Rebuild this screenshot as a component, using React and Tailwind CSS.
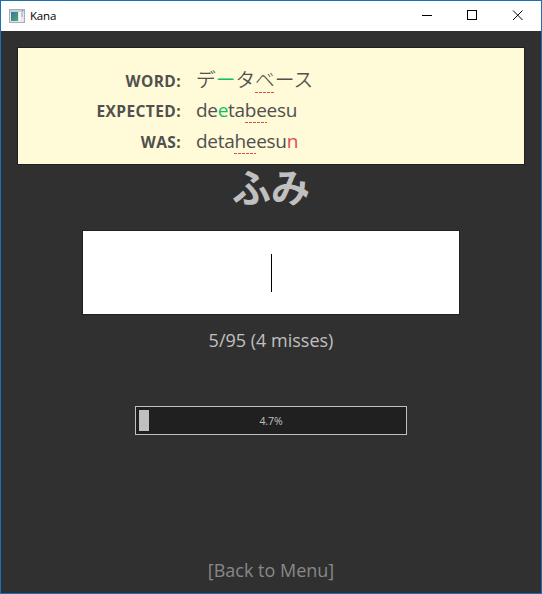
import React from "react";

const latin = "font-['Open_Sans','Noto_Sans',sans-serif]";
const kana = "font-['Noto_Sans_CJK_JP',sans-serif]";

function Squiggle({ children, className = "" }) {
  return (
    <span className="relative inline-block">
      {children}
      <span className={`absolute left-0 right-0 h-px bg-[linear-gradient(90deg,#dc4c50_75%,transparent_75%)] bg-[size:4px_1px] bg-repeat-x ${className}`} />
    </span>
  );
}

function TitleBar() {
  return (
    <header className="flex h-[30px] shrink-0 items-center bg-white text-black">
      <svg className="ml-2 block" width="16" height="14" viewBox="0 0 16 14" shapeRendering="crispEdges">
        <defs>
          <linearGradient id="pane" x1="0" y1="0" x2="1" y2="1">
            <stop offset="0" stopColor="#3d72a8" />
            <stop offset="1" stopColor="#4fa96b" />
          </linearGradient>
        </defs>
        <rect x="0.5" y="0.5" width="15" height="13" fill="#e4e7e9" stroke="#a9b0b5" />
        <rect x="1" y="1" width="14" height="2" fill="#c9ced2" />
        <rect x="2" y="3" width="7" height="9" fill="url(#pane)" />
        <rect x="10" y="3" width="2" height="9" fill="#f7f7f7" />
        <rect x="12" y="3" width="2" height="5" fill="#b8c9d2" />
        <rect x="13" y="1" width="1" height="1" fill="#4e789b" />
      </svg>
      <span className={`${latin} ml-[5px] text-[11.5px] leading-4 tracking-[-0.2px]`}>Kana</span>
      <svg className="ml-auto block" width="138" height="30" fill="none" stroke="black">
        <path d="M19 14.5H29" />
        <rect x="64.5" y="9.5" width="9" height="9" />
        <path d="M110 9.5L119.5 19M119.5 9.5L110 19" />
      </svg>
    </header>
  );
}

function Row({ label, children }) {
  return (
    <div className="flex h-[31px] items-baseline">
      <div className={`${latin} mr-[15px] w-[163px] text-right text-[15.5px] font-bold leading-[30px] tracking-[0.4px]`}>{label}</div>
      <div className="whitespace-nowrap leading-[30px]">{children}</div>
    </div>
  );
}

export default function App() {
  return (
    <div className="flex h-[594px] w-[542px] flex-col overflow-hidden border border-[#1c6fb5] bg-[#303030]">
      <TitleBar />
      <main className="flex flex-1 flex-col items-center">
        <section className="mt-4 h-[118px] w-[508px] border border-[#202020] bg-[#fffad7] pt-4 text-[#505050]">
          <Row label="WORD:">
            <span className={`${kana} text-[19.7px] font-[350]`}>
              デ<span className="text-[#0bc163]">ー</span>タ<Squiggle className="bottom-px"><span className="font-light">ベ</span></Squiggle>ース
            </span>
          </Row>
          <Row label="EXPECTED:">
            <span className={`${latin} text-[19px] tracking-[-0.3px]`}>
              de<span className="text-[#0bc163]">e</span>ta<Squiggle className="bottom-[2px]">be</Squiggle>esu
            </span>
          </Row>
          <Row label="WAS:">
            <span className={`${latin} text-[19px] tracking-[-0.3px]`}>
              deta<Squiggle className="bottom-[2px]">he</Squiggle>esu<span className="text-[#dc4c50]">n</span>
            </span>
          </Row>
        </section>
        <h1 className={`${kana} h-[65px] text-[39px] font-bold leading-[40px] text-[#c0c0c0]`}>ふみ</h1>
        <div className="flex h-[85px] w-[378px] items-center justify-center border border-[#202020] bg-white">
          <div className="h-[38px] w-px bg-black" />
        </div>
        <p className={`${latin} mt-[10px] h-[30px] text-[18px] leading-[30px] text-[#c0c0c0]`}>5/95 (4 misses)</p>
        <div className="mt-[51px] grid h-[29px] w-[272px] items-center border border-[#c0c0c0] bg-[#202020] p-[3px]">
          <div className="col-start-1 row-start-1 h-[21px] w-[10px] bg-[#c0c0c0]" />
          <span className={`${latin} col-start-1 row-start-1 pt-0.5 text-center text-[10.5px] tracking-[-0.1px] text-[#c0c0c0]`}>4.7%</span>
        </div>
        <button className={`${latin} mb-[8px] mt-auto h-[30px] text-[18px] leading-[30px] text-[#888888]`}>[Back to Menu]</button>
      </main>
    </div>
  );
}
